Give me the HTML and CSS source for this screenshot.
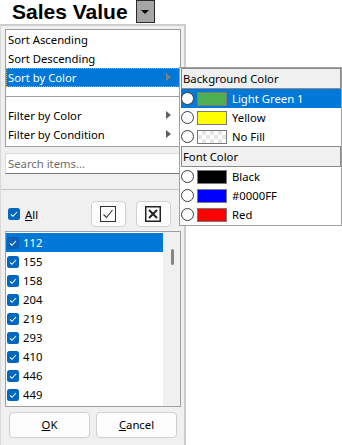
FILE: index.html
```html
<!DOCTYPE html>
<html>
<head>
<meta charset="utf-8">
<link rel="stylesheet" href="styles.css">
</head>
<body>
<div class="title-row">
  <span class="title">Sales Value</span>
  <span class="dd-btn"><span class="tri"></span></span>
</div>
<div class="panel">
  <div class="menu">
    <div class="mi">Sort Ascending</div>
    <div class="mi">Sort Descending</div>
    <div class="mi sel sub">Sort by Color</div>
    <div class="sep"></div>
    <div class="mi sub">Filter by Color</div>
    <div class="mi sub">Filter by Condition</div>
  </div>
  <div class="search">Search items...</div>
  <div class="hsep"></div>
  <div class="allrow">
    <div class="all">
      <svg class="cb" viewBox="0 0 12 12"><rect width="12" height="12" rx="2.5" fill="#0067c0"/><path d="M3 6.3l2 2 4-4.3" stroke="#fff" stroke-width="1.1" fill="none"/></svg>
      <span class="all-label"><u>A</u>ll</span>
    </div>
    <div class="ibtn"><svg width="16" height="16" viewBox="0 0 16 16"><rect x="0.5" y="0.5" width="15" height="15" fill="none" stroke="#333"/><path d="M3.5 8.5l3 3 6-7.5" fill="none" stroke="#333" stroke-width="1.1"/></svg></div>
    <div class="ibtn"><svg width="16" height="16" viewBox="0 0 16 16"><rect x="0.75" y="0.75" width="14.5" height="14.5" fill="none" stroke="#222" stroke-width="1.5"/><path d="M4 4l8 8M12 4l-8 8" fill="none" stroke="#222" stroke-width="2"/></svg></div>
  </div>
  <div class="list">
    <div class="rows">
      <div class="row sel"><svg class="cb" viewBox="0 0 12 12"><rect width="12" height="12" rx="2.5" fill="#0a5fb4"/><path d="M3 6.3l2 2 4-4.3" stroke="#fff" stroke-width="1.1" fill="none"/></svg><span class="num">112</span></div>
      <div class="row"><svg class="cb" viewBox="0 0 12 12"><rect width="12" height="12" rx="2.5" fill="#0067c0"/><path d="M3 6.3l2 2 4-4.3" stroke="#fff" stroke-width="1.1" fill="none"/></svg><span class="num">155</span></div>
      <div class="row"><svg class="cb" viewBox="0 0 12 12"><rect width="12" height="12" rx="2.5" fill="#0067c0"/><path d="M3 6.3l2 2 4-4.3" stroke="#fff" stroke-width="1.1" fill="none"/></svg><span class="num">158</span></div>
      <div class="row"><svg class="cb" viewBox="0 0 12 12"><rect width="12" height="12" rx="2.5" fill="#0067c0"/><path d="M3 6.3l2 2 4-4.3" stroke="#fff" stroke-width="1.1" fill="none"/></svg><span class="num">204</span></div>
      <div class="row"><svg class="cb" viewBox="0 0 12 12"><rect width="12" height="12" rx="2.5" fill="#0067c0"/><path d="M3 6.3l2 2 4-4.3" stroke="#fff" stroke-width="1.1" fill="none"/></svg><span class="num">219</span></div>
      <div class="row"><svg class="cb" viewBox="0 0 12 12"><rect width="12" height="12" rx="2.5" fill="#0067c0"/><path d="M3 6.3l2 2 4-4.3" stroke="#fff" stroke-width="1.1" fill="none"/></svg><span class="num">293</span></div>
      <div class="row"><svg class="cb" viewBox="0 0 12 12"><rect width="12" height="12" rx="2.5" fill="#0067c0"/><path d="M3 6.3l2 2 4-4.3" stroke="#fff" stroke-width="1.1" fill="none"/></svg><span class="num">410</span></div>
      <div class="row"><svg class="cb" viewBox="0 0 12 12"><rect width="12" height="12" rx="2.5" fill="#0067c0"/><path d="M3 6.3l2 2 4-4.3" stroke="#fff" stroke-width="1.1" fill="none"/></svg><span class="num">446</span></div>
      <div class="row"><svg class="cb" viewBox="0 0 12 12"><rect width="12" height="12" rx="2.5" fill="#0067c0"/><path d="M3 6.3l2 2 4-4.3" stroke="#fff" stroke-width="1.1" fill="none"/></svg><span class="num">449</span></div>
    </div>
    <div class="scroll"><div class="thumb"></div></div>
  </div>
  <div class="btns">
    <div class="btn"><u>O</u>K</div>
    <div class="btn"><u>C</u>ancel</div>
  </div>
</div>

<div class="submenu">
  <div class="hdr">Background Color</div>
  <div class="srow sel"><span class="radio"></span><span class="sw green"></span><span class="lbl">Light Green 1</span></div>
  <div class="srow"><span class="radio"></span><span class="sw yellow"></span><span class="lbl">Yellow</span></div>
  <div class="srow"><span class="radio"></span><span class="sw nofill"></span><span class="lbl">No Fill</span></div>
  <div class="hdr">Font Color</div>
  <div class="srow"><span class="radio"></span><span class="sw black"></span><span class="lbl">Black</span></div>
  <div class="srow"><span class="radio"></span><span class="sw blue"></span><span class="lbl">#0000FF</span></div>
  <div class="srow"><span class="radio"></span><span class="sw red"></span><span class="lbl">Red</span></div>
</div>
</body>
</html>
```

FILE: styles.css
```css
* { box-sizing: border-box; }
body {
  margin: 0;
  background: #fff;
  font-family: "Noto Sans", sans-serif;
  font-size: 11.3px;
  color: #000;
  width: 342px;
  height: 445px;
  overflow: hidden;
  position: relative;
}
.title-row {
  height: 24px;
  display: flex;
  align-items: flex-start;
  padding-left: 12px;
}
.title {
  font: bold 21px/24px "Liberation Sans", Arial, sans-serif;
}
.dd-btn {
  margin-left: 8px;
  width: 19px;
  height: 23px;
  background: #a6a6a6;
  border: 1px solid #2a2a2a;
  display: flex;
  align-items: center;
  justify-content: center;
}
.tri {
  width: 0;
  height: 0;
  border-left: 4px solid transparent;
  border-right: 4px solid transparent;
  border-top: 4px solid #000;
}
.panel {
  width: 186px;
  height: 430px;
  background: #f0f0f0;
  border-top: 2px solid #cdcdcd;
  border-right: 2px solid #cdcdcd;
  border-left: 1px solid #d8d8d8;
  padding: 3px 3px 0 4px;
}
.menu {
  background: #fff;
  border: 1px solid #a0a0a0;
  padding-bottom: 2px;
}
.mi {
  height: 19px;
  line-height: 19px;
  padding-left: 2px;
  position: relative;
}
.mi.sel {
  background: #0078d7;
  color: #fff;
  outline: 1px dotted #f39a3c;
  outline-offset: -1px;
}
.mi.sub::after {
  content: "";
  position: absolute;
  right: 9px;
  top: 5px;
  border-left: 5px solid #606060;
  border-top: 4.5px solid transparent;
  border-bottom: 4.5px solid transparent;
}
.mi.sel.sub::after { border-left-color: #7f7f7f; }
.sep {
  height: 1px;
  background: #a0a0a0;
  margin: 9px 0;
}
.search {
  margin-top: 6px;
  height: 21px;
  background: #fff;
  border: 1px solid #d9d9d9;
  border-bottom-color: #7a7a7a;
  line-height: 19px;
  padding-left: 2px;
  color: #6d6d6d;
}
.hsep {
  margin: 15px 0 0 -4px;
  width: 180px;
  height: 1px;
  background: #c4c4c4;
}
.allrow {
  margin-top: 11px;
  height: 26px;
  display: flex;
  align-items: center;
}
.all {
  width: 88px;
  display: flex;
  align-items: center;
  padding-left: 3px;
}
.all-label { margin-left: 5px; }
.cb { width: 12px; height: 12px; flex: none; display: block; }
.ibtn {
  width: 36px;
  height: 26px;
  margin-right: 10px;
  background: #fdfdfd;
  border: 1px solid #d0d0d0;
  border-radius: 4px;
  display: flex;
  align-items: center;
  justify-content: center;
}
.ibtn svg { display: block; }
.list {
  margin-top: 4px;
  height: 176px;
  border: 1px solid #a0a0a0;
  background: #fff;
  display: flex;
}
.rows { flex: 1; padding-top: 1px; }
.row {
  height: 19px;
  display: flex;
  align-items: center;
  padding-left: 1px;
}
.row.sel { background: #0078d7; color: #fff; }
.num { margin-left: 4px; }
.scroll {
  width: 17px;
  background: #f0f0f0;
  padding: 17px 0 0 8px;
}
.thumb {
  width: 3px;
  height: 16px;
  background: #858585;
  border-radius: 2px;
}
.btns {
  margin-top: 5px;
  display: flex;
  gap: 6px;
  padding-left: 4px;
}
.btn {
  width: 81px;
  height: 26px;
  background: #fdfdfd;
  border: 1px solid #d0d0d0;
  border-radius: 4px;
  text-align: center;
  line-height: 24px;
}
.submenu {
  position: absolute;
  left: 179px;
  top: 67px;
  width: 163px;
  height: 159px;
  background: #fff;
  border: 1px solid #a0a0a0;
  padding-left: 1px;
}
.hdr {
  height: 21px;
  background: #f0f0f0;
  border: 1px solid #8a8a8a;
  line-height: 19px;
  padding-left: 1px;
}
.srow {
  height: 19px;
  display: flex;
  align-items: center;
}
.srow.sel { background: #0078d7; color: #fff; }
.radio {
  width: 13px;
  height: 13px;
  border-radius: 50%;
  background: #fff;
  border: 1px solid #3c3c3c;
  flex: none;
}
.sw {
  width: 30px;
  height: 14px;
  margin-left: 3px;
  border: 1px solid #7a7a7a;
  flex: none;
}
.lbl { margin-left: 5px; }
.green { background: #4caf50; }
.yellow { background: #ffff00; }
.nofill { background: repeating-conic-gradient(#e6e6e6 0 25%, #fff 0 50%) 0 0 / 8px 8px; }
.black { background: #000; }
.blue { background: #0000ff; }
.red { background: #ff0000; }
```
